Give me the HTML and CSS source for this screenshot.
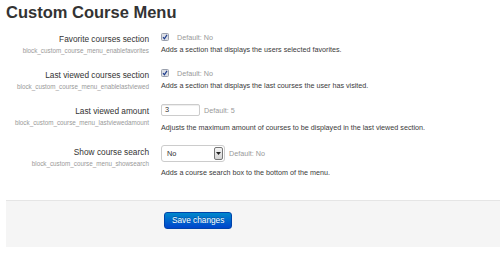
FILE: index.html
```html
<!DOCTYPE html>
<html>
<head>
    <title>Custom Course Menu</title>
    <meta charset="utf-8">
    <link rel="stylesheet" href="styles.css">
</head>
<body>
    <h2 class="page-title">Custom Course Menu</h2>

    <form class="settings">
        <div class="setting">
            <div class="setting-label">
                <label>Favorite courses section</label>
                <span class="setting-name">block_custom_course_menu_enablefavorites</span>
            </div>
            <div class="setting-field">
                <div class="field-line">
                    <span class="check"><svg width="8" height="8" viewBox="0 0 8 8"><rect x="0.5" y="0.5" width="7" height="7" rx="1" fill="#dcdfe6" stroke="#9aa0ad"/><path d="M2 4.2 L3.4 5.8 L6 1.8" fill="none" stroke="#1d3c8c" stroke-width="1.2"/></svg></span>
                    <span class="default">Default: No</span>
                </div>
                <div class="desc">Adds a section that displays the users selected favorites.</div>
            </div>
        </div>

        <div class="setting">
            <div class="setting-label">
                <label>Last viewed courses section</label>
                <span class="setting-name">block_custom_course_menu_enablelastviewed</span>
            </div>
            <div class="setting-field">
                <div class="field-line">
                    <span class="check"><svg width="8" height="8" viewBox="0 0 8 8"><rect x="0.5" y="0.5" width="7" height="7" rx="1" fill="#dcdfe6" stroke="#9aa0ad"/><path d="M2 4.2 L3.4 5.8 L6 1.8" fill="none" stroke="#1d3c8c" stroke-width="1.2"/></svg></span>
                    <span class="default">Default: No</span>
                </div>
                <div class="desc">Adds a section that displays the last courses the user has visited.</div>
            </div>
        </div>

        <div class="setting">
            <div class="setting-label">
                <label>Last viewed amount</label>
                <span class="setting-name">block_custom_course_menu_lastviewedamount</span>
            </div>
            <div class="setting-field">
                <div class="field-line">
                    <span class="text-input">3</span>
                    <span class="default">Default: 5</span>
                </div>
                <div class="desc desc-input">Adjusts the maximum amount of courses to be displayed in the last viewed section.</div>
            </div>
        </div>

        <div class="setting">
            <div class="setting-label">
                <label>Show course search</label>
                <span class="setting-name">block_custom_course_menu_showsearch</span>
            </div>
            <div class="setting-field">
                <div class="field-line">
                    <span class="select">No<span class="select-arrow"><svg width="5" height="3" viewBox="0 0 5 3"><path d="M0 0 H5 L2.5 3 Z" fill="#222"/></svg></span></span>
                    <span class="default">Default: No</span>
                </div>
                <div class="desc desc-select">Adds a course search box to the bottom of the menu.</div>
            </div>
        </div>

        <div class="actions">
            <button type="button" class="btn-primary">Save changes</button>
        </div>
    </form>
</body>
</html>
```

FILE: styles.css
```css
body {
    font-family: "Liberation Sans", Arial, sans-serif;
    color: #333;
    margin: 0 0 0 6px;
    padding: 0;
}
.page-title {
    font-size: 16.5px;
    line-height: 20px;
    font-weight: bold;
    margin: 2px 0 0 0;
}
.settings {
    padding-top: 10px;
}
.setting {
    display: flex;
    margin-bottom: 12px;
}
.setting-label {
    width: 143px;
    text-align: right;
    padding-top: 2px;
    display: flex;
    flex-direction: column;
}
.setting-label label {
    font-size: 8.3px;
    line-height: 11px;
}
.setting-name {
    font-size: 6.3px;
    line-height: 11px;
    color: #999;
}
.setting-field {
    margin-left: 12px;
}
.field-line {
    display: flex;
    align-items: center;
    min-height: 10px;
}
.check {
    display: flex;
    width: 8px;
    height: 8px;
    margin-right: 8px;
}
.default {
    font-size: 7.2px;
    color: #999;
}
.desc {
    font-size: 7.2px;
    line-height: 11px;
    margin-top: 2px;
    color: #3a3a3a;
}
.desc-input {
    margin-top: 6px;
}
.desc-select {
    margin-top: 5px;
}
.text-input {
    box-sizing: border-box;
    width: 39px;
    height: 12px;
    border: 1px solid #ccc;
    border-radius: 2px;
    font-size: 7.4px;
    line-height: 10px;
    padding-left: 3px;
    margin-right: 4px;
    box-shadow: inset 0 1px 1px rgba(0, 0, 0, 0.075);
}
.select {
    box-sizing: border-box;
    width: 64px;
    height: 17px;
    border: 1px solid #ccc;
    border-radius: 3px;
    font-size: 7.4px;
    display: flex;
    align-items: center;
    justify-content: space-between;
    padding: 1px 1px 1px 5px;
    margin-right: 4px;
    background: #fff;
}
.select-arrow {
    box-sizing: border-box;
    width: 9px;
    height: 13px;
    border: 1px solid #777;
    border-radius: 2px;
    background: linear-gradient(#f4f4f4, #d4d4d4);
    display: flex;
    align-items: center;
    justify-content: center;
}
.actions {
    margin-top: 22px;
    background: #f5f5f5;
    border-top: 1px solid #e5e5e5;
    height: 47px;
    box-sizing: border-box;
    padding: 11px 0 0 158px;
}
.btn-primary {
    display: block;
    font-family: "Liberation Sans", Arial, sans-serif;
    font-size: 8.25px;
    line-height: 15px;
    padding: 0 7px;
    color: #fff;
    background: linear-gradient(#0088cc, #0044cc);
    border: 1px solid #0044aa;
    border-radius: 3px;
    text-shadow: 0 -1px 0 rgba(0, 0, 0, 0.25);
    cursor: pointer;
}
```
